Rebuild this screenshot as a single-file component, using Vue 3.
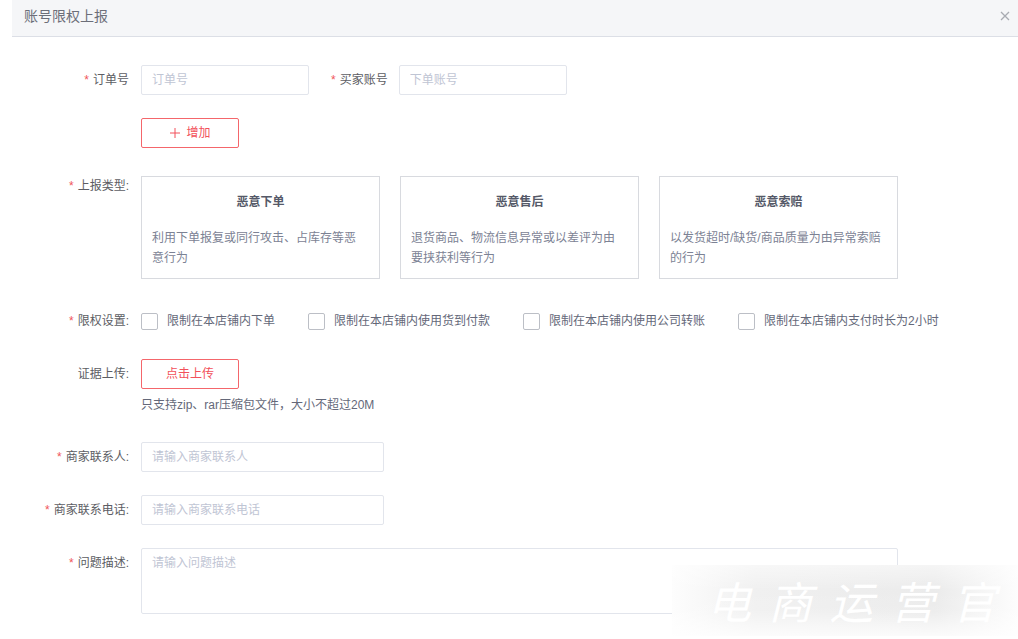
<script setup>
import { ref } from 'vue'

const types = [
  { title: '恶意下单', text: '利用下单报复或同行攻击、占库存等恶意行为' },
  { title: '恶意售后', text: '退货商品、物流信息异常或以差评为由要挟获利等行为' },
  { title: '恶意索赔', text: '以发货超时/缺货/商品质量为由异常索赔的行为' },
]
const limits = [
  '限制在本店铺内下单',
  '限制在本店铺内使用货到付款',
  '限制在本店铺内使用公司转账',
  '限制在本店铺内支付时长为2小时',
]
const brand = ['电', '商', '运', '营', '官']

const selectedType = ref('')
const selectedLimits = ref([])
const order = ref('')
const buyer = ref('')
const contact = ref('')
const phone = ref('')
const description = ref('')
</script>

<template>
  <main class="dialog">
    <header class="head">
      <h1>账号限权上报</h1>
      <button type="button" class="close" aria-label="关闭">
        <svg viewBox="0 0 10 10" width="10" height="10" aria-hidden="true">
          <path d="M1 1 9 9M9 1 1 9" fill="none" stroke="currentColor" stroke-width="1.3" />
        </svg>
      </button>
    </header>

    <form class="form" @submit.prevent>
      <div class="row">
        <label class="label required" for="order">订单号</label>
        <div class="pair">
          <input id="order" v-model="order" class="box short" type="text" placeholder="订单号" />
          <label class="label inline required" for="buyer">买家账号</label>
          <input id="buyer" v-model="buyer" class="box short" type="text" placeholder="下单账号" />
        </div>
      </div>

      <div class="row">
        <div class="field">
          <button type="button" class="action">
            <svg viewBox="0 0 12 12" width="12" height="12" aria-hidden="true">
              <path d="M6 1V11M1 6H11" fill="none" stroke="currentColor" stroke-width="1" />
            </svg>
            <span>增加</span>
          </button>
        </div>
      </div>

      <div class="row types">
        <span id="type-label" class="label top required">上报类型:</span>
        <div class="cards" role="group" aria-labelledby="type-label">
          <button
            v-for="t in types"
            :key="t.title"
            type="button"
            class="card"
            :class="{ chosen: selectedType === t.title }"
            :aria-pressed="selectedType === t.title"
            @click="selectedType = t.title"
          >
            <strong>{{ t.title }}</strong>
            <span class="about">{{ t.text }}</span>
          </button>
        </div>
      </div>

      <div class="row limits">
        <span id="limit-label" class="label slim required">限权设置:</span>
        <div class="checks" role="group" aria-labelledby="limit-label">
          <label v-for="l in limits" :key="l" class="check">
            <input v-model="selectedLimits" type="checkbox" :value="l" />
            <span>{{ l }}</span>
          </label>
        </div>
      </div>

      <div class="row upload">
        <span id="upload-label" class="label">证据上传:</span>
        <div class="field">
          <button type="button" class="action" aria-describedby="upload-label upload-hint">点击上传</button>
          <p id="upload-hint">只支持zip、rar压缩包文件，大小不超过20M</p>
        </div>
      </div>

      <div class="row">
        <label class="label required" for="contact">商家联系人:</label>
        <div class="field">
          <input id="contact" v-model="contact" class="box medium" type="text" placeholder="请输入商家联系人" />
        </div>
      </div>

      <div class="row">
        <label class="label required" for="phone">商家联系电话:</label>
        <div class="field">
          <input id="phone" v-model="phone" class="box medium" type="text" placeholder="请输入商家联系电话" />
        </div>
      </div>

      <div class="row">
        <label class="label required" for="description">问题描述:</label>
        <div class="field">
          <textarea id="description" v-model="description" class="box area" placeholder="请输入问题描述"></textarea>
        </div>
      </div>
    </form>

    <div class="brand">
      <span v-for="c in brand" :key="c">{{ c }}</span>
    </div>
  </main>
</template>

<style>
body {
  margin: 0;
  background: #fff;
}
</style>

<style scoped>
.dialog {
  position: relative;
  min-height: 100vh;
  box-sizing: border-box;
  overflow: hidden;
  font-family: "Liberation Sans", "Noto Sans CJK SC", sans-serif;
  font-size: 12px;
  line-height: 20px;
  color: #646879;
}

button,
input,
textarea {
  font: inherit;
  box-sizing: border-box;
  margin: 0;
}

button {
  cursor: pointer;
}

.head {
  display: flex;
  align-items: center;
  justify-content: space-between;
  height: 36px;
  margin-left: 12px;
  padding: 0 8px 5px 12px;
  box-sizing: border-box;
  background: #f5f6f8;
  box-shadow: 0 1px #dcdfe6;
}

.head h1 {
  margin: 0;
  font-size: 14px;
  font-weight: 400;
  color: #6c6e79;
}

.close {
  display: flex;
  padding: 0;
  border: 0;
  background: none;
  color: #a8abb2;
}

.form {
  display: flex;
  flex-direction: column;
  gap: 23px;
  padding: 29px 0 24px;
}

.row {
  display: grid;
  grid-template-columns: 129px minmax(0, 1fr);
  column-gap: 12px;
  align-items: start;
}

.label {
  line-height: 30px;
  text-align: right;
  white-space: nowrap;
  color: #5c5d63;
}

.label.top,
.label.slim {
  line-height: 20px;
}

.required::before {
  content: "*";
  margin-right: 4px;
  color: #f0555a;
}

.field {
  grid-column: 2;
  padding-right: 120px;
}

.pair {
  display: flex;
}

.inline {
  margin: 0 11px 0 22px;
}

.box {
  display: block;
  height: 30px;
  padding: 0 10px;
  border: 1px solid #e2e5ec;
  border-radius: 2px;
  outline: 0;
  background: #fff;
  color: #646879;
}

.box::placeholder {
  color: #bfc5d4;
  opacity: 1;
}

.box:focus {
  border-color: #f0555a;
}

.short {
  width: 168px;
}

.medium {
  width: 243px;
}

.area {
  width: 100%;
  height: 66px;
  padding: 4px 10px;
  resize: none;
}

.action {
  display: flex;
  align-items: center;
  justify-content: center;
  gap: 5px;
  width: 98px;
  height: 30px;
  padding: 0;
  border: 1px solid #f4666b;
  border-radius: 2px;
  background: #fff;
  color: #f2505a;
}

.types {
  margin-top: 5px;
}

.cards {
  display: grid;
  grid-template-columns: repeat(3, minmax(0, 1fr));
  gap: 20px;
  padding-right: 120px;
}

.card {
  display: flex;
  flex-direction: column;
  gap: 16px;
  padding: 15px 10px 10px;
  border: 1px solid #d8dadf;
  background: #fff;
  text-align: left;
  color: #7c8294;
}

.card strong {
  align-self: center;
  color: #555968;
}

.about {
  padding-right: 4px;
}

.chosen {
  border-color: #f0555a;
}

.limits {
  margin-top: 9px;
}

.checks {
  display: flex;
  flex-wrap: wrap;
  gap: 8px 33px;
}

.check {
  display: flex;
  align-items: center;
  gap: 9px;
  white-space: nowrap;
}

.check input {
  appearance: none;
  width: 17px;
  height: 17px;
  border: 1px solid #bcbfc6;
  border-radius: 2px;
  background: #fff;
}

.check input:checked {
  background: #f0555a;
}

.upload {
  margin-top: 5px;
  margin-bottom: 4px;
}

.upload p {
  margin: 6px 0 0;
}

/* Brand mark floating above the lower right corner of the form */
.brand {
  position: absolute;
  right: 0;
  bottom: 3px;
  display: flex;
  justify-content: space-between;
  width: 346px;
  height: 71px;
  padding: 0 22px 0 35px;
  box-sizing: border-box;
  pointer-events: none;
  background: linear-gradient(90deg, #fdfdfd, #f0f0f0 24%, #ebebeb 76%, #fdfdfd);
  font-family: "Noto Sans CJK SC", sans-serif;
  font-size: 44px;
  font-style: italic;
  font-weight: 400;
  line-height: 71px;
  color: #fff;
}

.brand::before {
  content: "";
  position: absolute;
  inset: 0;
  background: linear-gradient(rgba(255, 255, 255, 0.5), rgba(255, 255, 255, 0) 35%, rgba(255, 255, 255, 0.1) 65%, rgba(255, 255, 255, 0.8));
}

.brand span {
  position: relative;
}
</style>
